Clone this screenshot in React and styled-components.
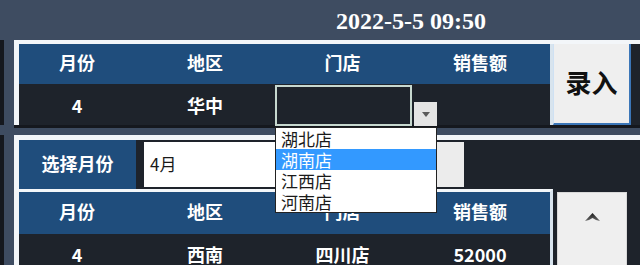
import React from "react";
import styled, { createGlobalStyle } from "styled-components";

const COLORS = {
  slate: "#3e4c61",
  frame: "#f3f6f9",
  blue: "#1f4d7c",
  dark: "#1e232b",
  shadow: "#15181e",
  button: "#efefef",
  highlight: "#3399ff",
};

const GlobalStyle = createGlobalStyle`
  html, body {
    margin: 0;
    padding: 0;
    background: ${COLORS.slate};
  }
  * {
    box-sizing: border-box;
  }
`;

const Screen = styled.div`
  width: 640px;
  height: 265px;
  overflow: hidden;
  background: ${COLORS.slate};
  font-family: "Noto Sans CJK SC", "Noto Sans", sans-serif;
`;

const TopBar = styled.div`
  height: 40px;
  display: flex;
  align-items: center;
  padding-left: 336px;
  padding-top: 2px;
`;

const Clock = styled.div`
  color: #ffffff;
  font-family: "Liberation Serif", serif;
  font-weight: 700;
  font-size: 24px;
  line-height: 1;
`;

const PanelRow = styled.div`
  border-left: 4px solid ${COLORS.shadow};
  padding-left: 10px;
  margin-bottom: ${(p) => p.$gap || 0}px;
`;

const Panel = styled.div`
  display: flex;
  flex-direction: column;
  background: ${COLORS.dark};
  border-top: ${(p) => p.$top || 4}px solid ${COLORS.frame};
  border-left: 5px solid ${COLORS.frame};
  box-shadow: 0 3px 0 ${COLORS.shadow};
`;

const Line = styled.div`
  display: flex;
  align-items: stretch;
`;

const Table = styled.div`
  width: 534px;
  display: flex;
  flex-direction: column;
  border-right: 3px solid #d8e4ee;
  border-top: ${(p) => (p.$framed ? "3px solid " + COLORS.frame : "none")};
`;

const Row = styled.div`
  display: grid;
  grid-template-columns: 116px 140px 135px 140px;
  height: ${(p) => p.$h}px;
  background: ${(p) => (p.$head ? COLORS.blue : COLORS.dark)};
`;

const Cell = styled.div`
  position: relative;
  display: flex;
  align-items: center;
  justify-content: center;
  color: #ffffff;
  font-weight: 700;
  font-size: 18px;
  padding-bottom: ${(p) => (p.$head ? 4 : 0)}px;
`;

const StoreCell = styled(Cell)`
  justify-content: flex-start;
  align-items: flex-end;
  padding-top: 1px;
`;

const Combo = styled.div`
  position: relative;
  display: flex;
  align-items: flex-end;
  gap: 2px;
`;

const ComboInput = styled.div`
  width: 137px;
  height: 41px;
  border: 2px solid #c7d8cf;
  background: ${COLORS.dark};
`;

const ArrowButton = styled.div`
  width: 23px;
  height: 24px;
  background: #e4e4e4;
  display: flex;
  align-items: center;
  justify-content: center;
`;

const DropList = styled.ul`
  position: absolute;
  top: 42px;
  left: 0;
  width: 162px;
  margin: 0;
  padding: 0;
  list-style: none;
  background: #ffffff;
  border: 1px solid #222;
  z-index: 5;
`;

const DropItem = styled.li`
  height: 21px;
  line-height: 21px;
  padding-left: 5px;
  font-size: 17px;
  font-weight: 400;
  color: ${(p) => (p.$active ? "#ffffff" : "#1a1a1a")};
  background: ${(p) => (p.$active ? COLORS.highlight : "transparent")};
`;

const EntryButton = styled.div`
  width: 78px;
  background: ${COLORS.button};
  border-left: 1px solid #cfe1f3;
  border-right: 2px solid #3b76b8;
  border-bottom: 2px solid #3b76b8;
  display: flex;
  align-items: center;
  justify-content: center;
  color: #111;
  font-size: 26px;
  font-weight: 700;
  padding-bottom: 4px;
`;

const FilterRow = styled.div`
  display: flex;
  height: 49px;
`;

const FilterLabel = styled.div`
  width: 117px;
  background: ${COLORS.blue};
  display: flex;
  align-items: center;
  justify-content: center;
  color: #fff;
  font-weight: 700;
  font-size: 18px;
  padding-bottom: 3px;
`;

const FilterInput = styled.div`
  margin: 2px 0 2px 8px;
  width: 293px;
  background: #fff;
  display: flex;
  align-items: center;
  padding-left: 6px;
  font-size: 17px;
  color: #1a1a1a;
  padding-bottom: 2px;
`;

const FilterButton = styled.div`
  margin: 2px 0;
  width: 27px;
  background: #ececec;
`;

const ScrollButton = styled.div`
  margin-left: 4px;
  margin-top: 3px;
  width: 70px;
  background: ${COLORS.button};
  border: 1px solid #d9d9d9;
  display: flex;
  align-items: center;
  justify-content: center;
  padding-bottom: 32px;
`;

const Strip = styled.div`
  flex: 1;
`;

const Caret = ({ up }) => (
  <svg width={up ? 15 : 8} height={up ? 9 : 5} viewBox={up ? "0 0 15 9" : "0 0 8 5"}>
    {up ? (
      <>
        <defs>
          <linearGradient id="caret" x1="0" y1="0" x2="0" y2="1">
            <stop offset="0" stopColor="#1a1a1a" />
            <stop offset="1" stopColor="#6a6a6a" />
          </linearGradient>
        </defs>
        <path d="M7.5 0 L15 8 L11 7 L7.5 5 L4 7 L0 8 Z" fill="url(#caret)" />
      </>
    ) : (
      <path d="M0 0 L8 0 L4 5 Z" fill="#5a5a5a" />
    )}
  </svg>
);

const HEAD = ["月份", "地区", "门店", "销售额"];
const STORES = ["湖北店", "湖南店", "江西店", "河南店"];

const App = () => {
  return (
    <Screen>
      <GlobalStyle />
      <TopBar>
        <Clock>2022-5-5 09:50</Clock>
      </TopBar>

      <PanelRow $gap={10}>
        <Panel $top={4}>
          <Line>
            <Table>
              <Row $head $h={40}>
                {HEAD.map((h) => (
                  <Cell $head key={h}>
                    {h}
                  </Cell>
                ))}
              </Row>
              <Row $h={41}>
                <Cell>4</Cell>
                <Cell>华中</Cell>
                <StoreCell>
                  <Combo>
                    <ComboInput />
                    <ArrowButton>
                      <Caret />
                    </ArrowButton>
                    <DropList>
                      {STORES.map((s) => (
                        <DropItem key={s} $active={s === "湖南店"}>
                          {s}
                        </DropItem>
                      ))}
                    </DropList>
                  </Combo>
                </StoreCell>
                <Cell />
              </Row>
            </Table>
            <EntryButton>录入</EntryButton>
            <Strip />
          </Line>
        </Panel>
      </PanelRow>

      <PanelRow>
        <Panel $top={5}>
          <FilterRow>
            <FilterLabel>选择月份</FilterLabel>
            <FilterInput>4月</FilterInput>
            <FilterButton />
          </FilterRow>
          <Line>
            <Table $framed>
              <Row $head $h={42}>
                {HEAD.map((h) => (
                  <Cell $head key={h}>
                    {h}
                  </Cell>
                ))}
              </Row>
              <Row $h={40}>
                <Cell>4</Cell>
                <Cell>西南</Cell>
                <Cell>四川店</Cell>
                <Cell>52000</Cell>
              </Row>
            </Table>
            <ScrollButton>
              <Caret up />
            </ScrollButton>
            <Strip />
          </Line>
        </Panel>
      </PanelRow>
    </Screen>
  );
};

export default App;
